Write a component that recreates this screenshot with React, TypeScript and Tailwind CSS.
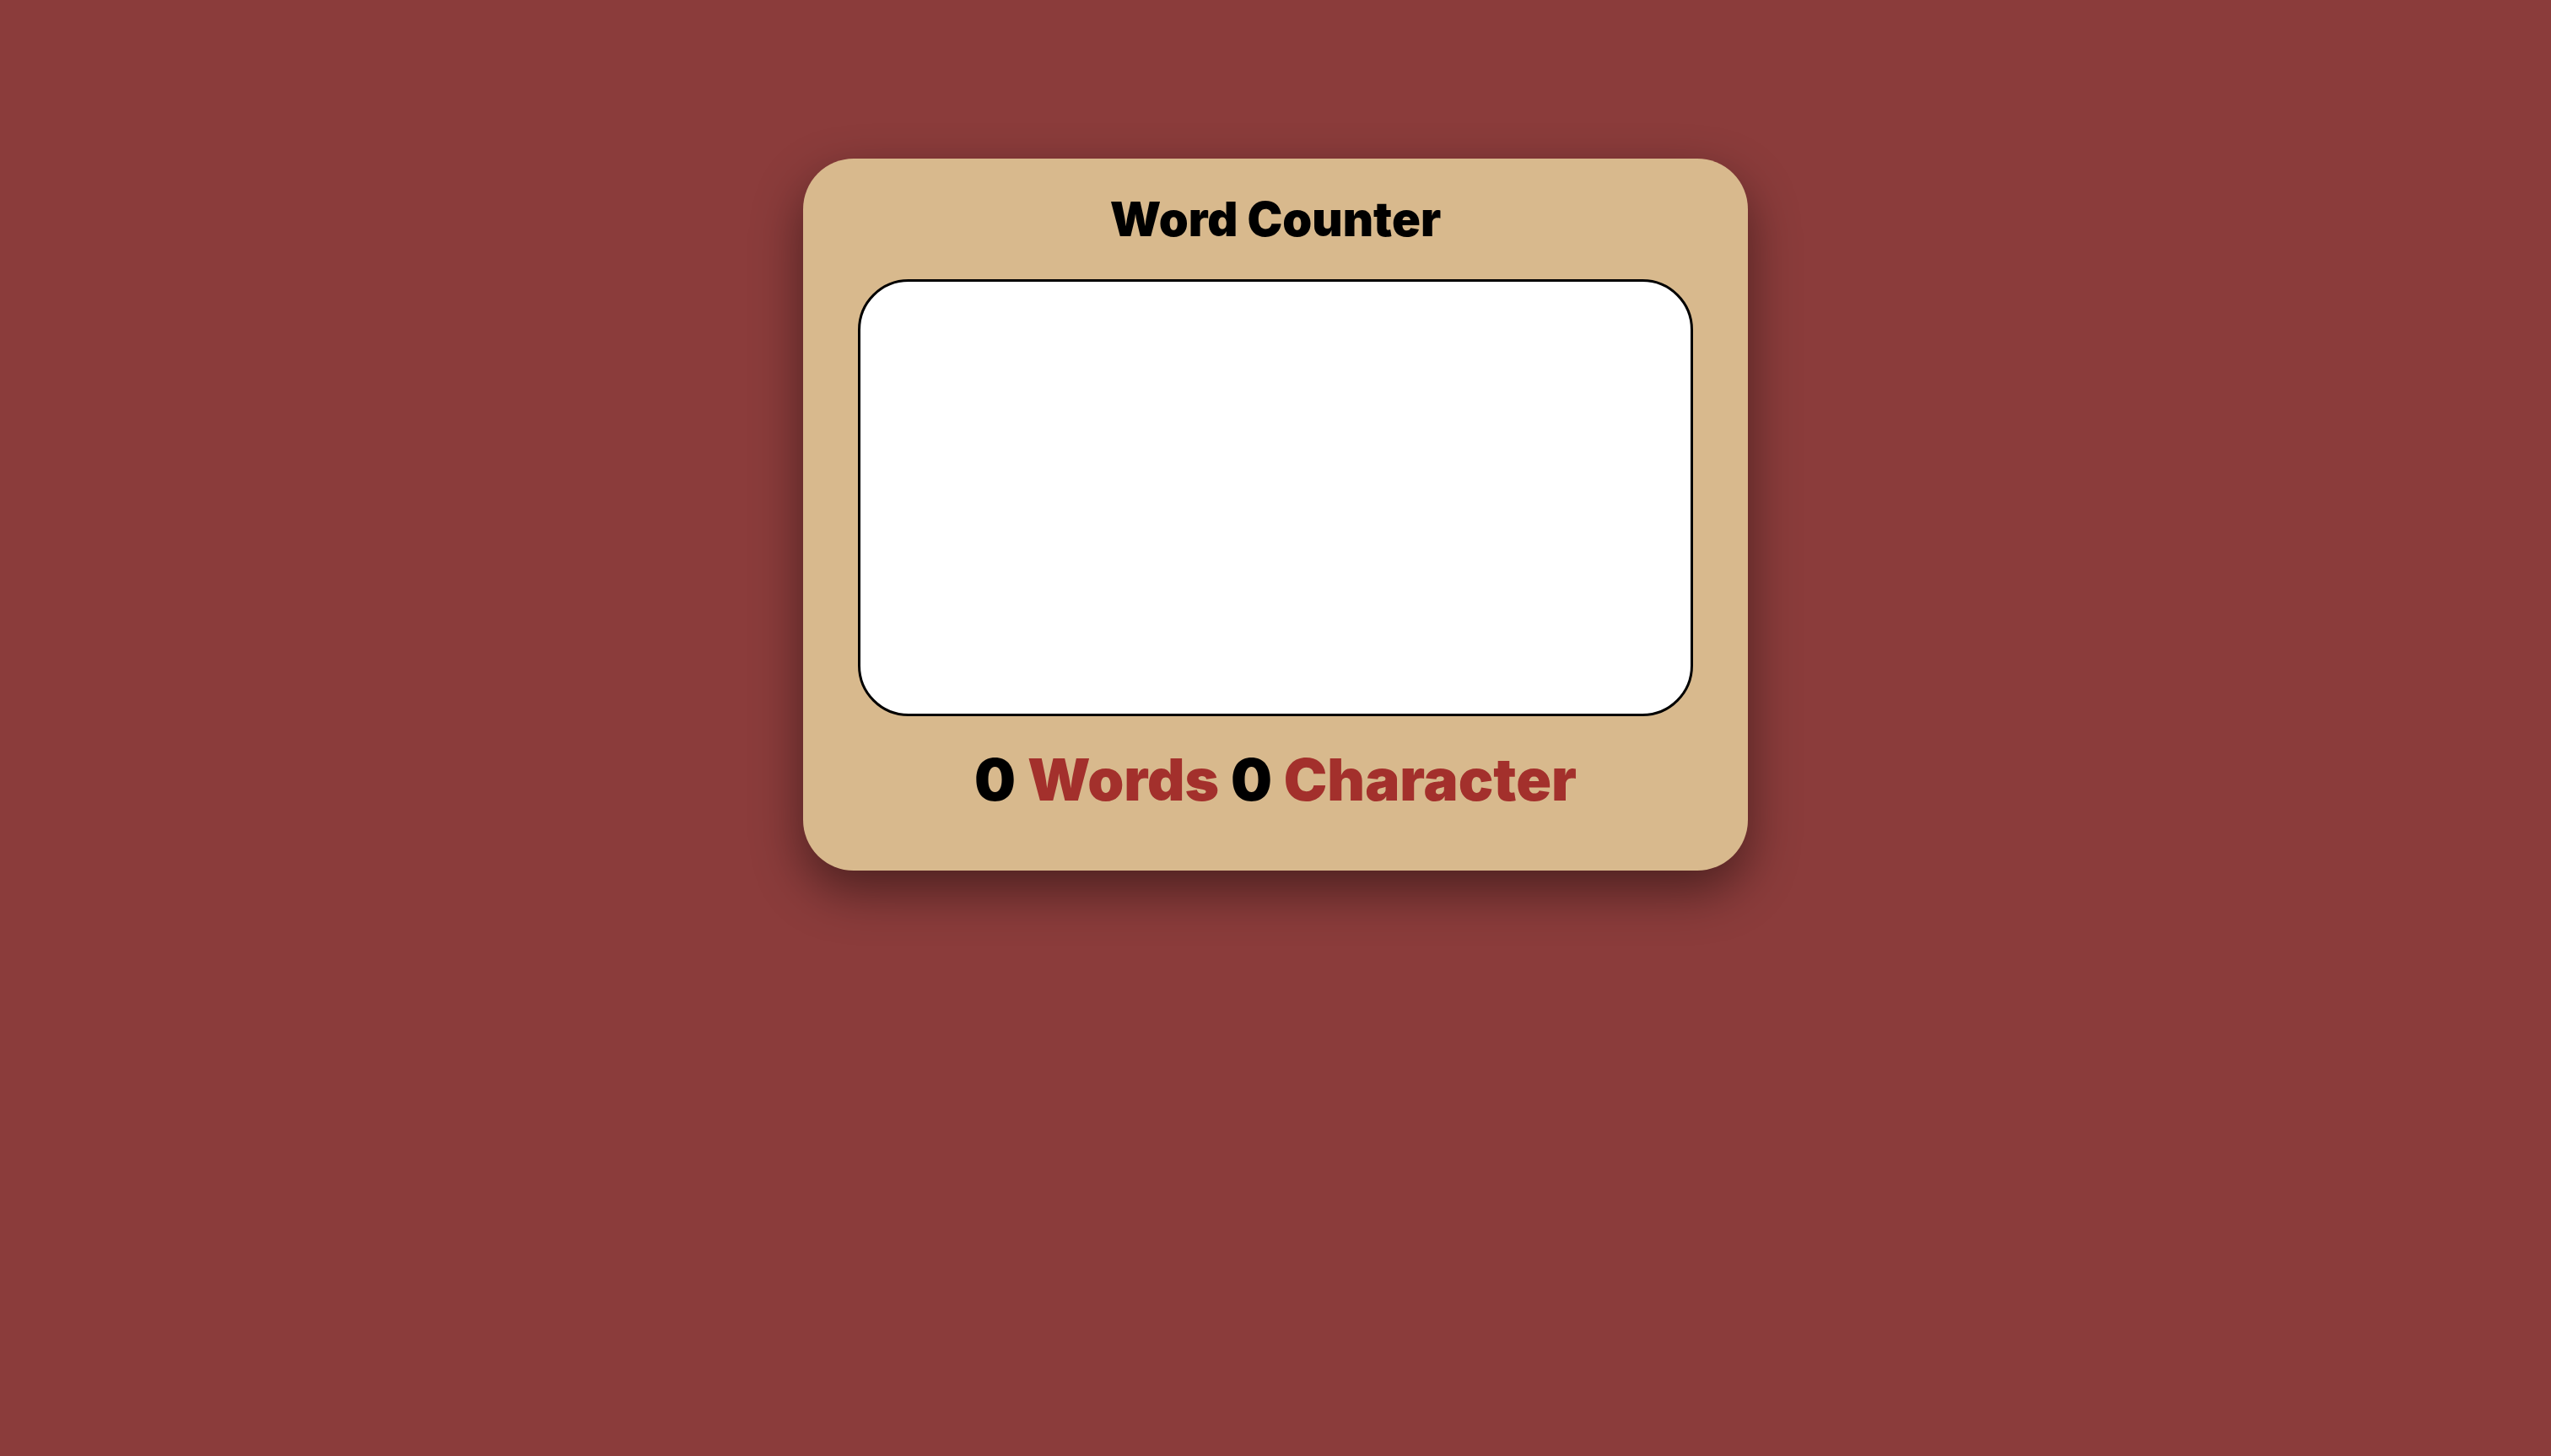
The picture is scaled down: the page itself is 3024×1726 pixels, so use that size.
import React, { useState } from "react";

export default function App() {
  const [text, setText] = useState("");
  const words = text.trim() === "" ? 0 : text.trim().split(/\s+/).length;
  const chars = text.length;
  return (
    <div
      className="min-h-screen w-full bg-[#8b3c3b] flex justify-center items-start pt-[188px]"
      style={{ fontFamily: "Inter, 'Noto Sans', sans-serif" }}
    >
      <div className="w-[1120px] h-[844px] bg-[#d8b98d] rounded-[60px] shadow-[0_24px_60px_rgba(0,0,0,0.45)] flex flex-col items-center pt-[44px]">
        <h1 className="text-[56px] leading-none font-black text-black h-[56px]">Word Counter</h1>
        <textarea
          value={text}
          onChange={(e) => setText(e.target.value)}
          className="mt-[43px] w-[990px] h-[518px] bg-white border-[3px] border-black rounded-[60px] resize-none outline-none p-10 text-3xl"
        />
        <p className="mt-[41px] text-[69px] leading-none font-black">
          <span className="text-black">{words}</span>{" "}
          <span className="text-[#a3302c]">Words</span>{" "}
          <span className="text-black">{chars}</span>{" "}
          <span className="text-[#a3302c]">Character</span>
        </p>
      </div>
    </div>
  );
}
